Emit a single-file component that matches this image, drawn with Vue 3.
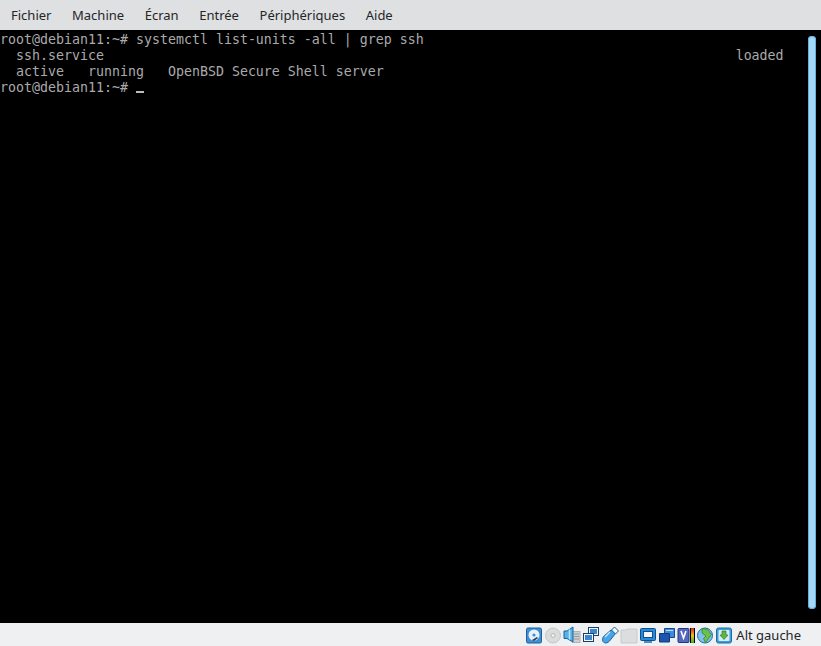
<script setup>
const menus = ['Fichier', 'Machine', 'Écran', 'Entrée', 'Périphériques', 'Aide']
const lines = [
  'root@debian11:~# systemctl list-units -all | grep ssh',
  '  ssh.service' + ' '.repeat(79) + 'loaded',
  '  active   running   OpenBSD Secure Shell server',
]
</script>

<template>
  <div class="window">
    <nav class="menubar">
      <span v-for="m in menus" :key="m" class="menu">{{ m }}</span>
    </nav>
    <main class="screen">
      <pre class="console"><template v-for="l in lines" :key="l">{{ l }}
</template>root@debian11:~# <span class="cursor"></span></pre>
      <div class="scroll"></div>
    </main>
    <footer class="status">
      <svg class="ic" width="18" height="18" viewBox="-1 0 18 18">
        <rect x="0.500" y="2" width="15" height="15" rx="1.500" fill="#3d8fd6" stroke="#1d5f9e"/>
        <circle cx="8" cy="9" r="5.500" fill="#e9f1f8"/>
        <circle cx="8" cy="9" r="1.600" fill="#3d8fd6"/>
        <path d="M6 14l5-3 1 1-4 3z" fill="#1c3d66"/>
      </svg>
      <svg class="ic" width="18" height="18" viewBox="0 0 18 18">
        <circle cx="9" cy="9.500" r="7.500" fill="#dadbdb" stroke="#c6c7c7"/>
        <circle cx="9" cy="9.500" r="2" fill="#eeeeee" stroke="#b8b8b8"/>
      </svg>
      <svg class="ic" width="18" height="18" viewBox="0 0 18 18">
        <rect x="9.500" y="5.500" width="7.500" height="11" fill="#cfd1d1" stroke="#b0b2b2"/>
        <path d="M11 8h5M11 10.500h5M11 13h5" stroke="#9a9c9c"/>
        <path d="M1 5h3l6-4v15l-6-3.500H1z" fill="#57b2ea" stroke="#14639e"/>
        <path d="M6.500 3.500v10" stroke="#bfe3f8" stroke-width="1.500"/>
      </svg>
      <svg class="ic" width="18" height="18" viewBox="0 0 18 18">
        <rect x="6.500" y="1.500" width="10" height="8" fill="#f3f7fa" stroke="#1c3d66"/>
        <rect x="8" y="3" width="7" height="5" fill="#3a86cf"/>
        <rect x="1.500" y="7.500" width="10" height="8" fill="#f3f7fa" stroke="#1c3d66"/>
        <rect x="3" y="9" width="7" height="5" fill="#3a86cf"/>
      </svg>
      <svg class="ic" width="18" height="18" viewBox="0 0 18 18">
        <path d="M10 4L2.500 10.500c-2 3-1 6 2 6.500 2 0 3-1 4-2l6-7.500z" fill="#45a5e8" stroke="#14639e"/>
        <path d="M10.500 4l3-3 4 4-3 3z" fill="#f4f6f8" stroke="#14639e"/>
        <path d="M4 11l5-5" stroke="#c6e6fb" stroke-width="1.500"/>
      </svg>
      <svg class="ic" width="18" height="18" viewBox="0 0 18 18">
        <path d="M1 4h5l1-1h10v14H1z" fill="#dcdddd" stroke="#c9caca"/>
      </svg>
      <svg class="ic" width="18" height="18" viewBox="0 0 18 18">
        <rect x="1.500" y="2.500" width="15" height="12" rx="1" fill="#2a8ada" stroke="#124f8a"/>
        <rect x="4.500" y="5.500" width="9" height="6" fill="#f4f8fb" stroke="#124f8a"/>
        <path d="M5 16h8" stroke="#1e6cb0" stroke-width="1.500"/>
      </svg>
      <svg class="ic" width="18" height="18" viewBox="0 0 18 18">
        <path d="M6.500 2.500h10v9h-10z" fill="#3e8bdc" stroke="#16478a"/>
        <path d="M1.500 7.500h10v8.500h-10z" fill="#1b55ad" stroke="#123b7a"/>
        <path d="M8 4.500h7" stroke="#bcdcf6"/>
      </svg>
      <span class="vbox">
        <svg width="13" height="18" viewBox="0 0 13 18">
          <rect x="1" y="2.500" width="11" height="14" rx="1" fill="#5468c0" stroke="#27347e"/>
          <path d="M4 5l2.500 7 2.500-7" fill="none" stroke="#fff" stroke-width="1.600"/>
        </svg>
        <i class="meter"></i>
      </span>
      <svg class="ic" width="18" height="18" viewBox="0 0 18 18">
        <circle cx="9" cy="9.500" r="7.500" fill="#7cc2ee" stroke="#1d6ca8"/>
        <path d="M6 2.500l5.500 1 4 5-6 8-2-4 2.500-2.500-4-3z" fill="#6cc04a" stroke="#2f7d25" stroke-width=".7"/>
      </svg>
      <svg class="ic" width="18" height="18" viewBox="-1 0 18 18">
        <rect x="0.500" y="2" width="15" height="15" rx="2" fill="#3f9ed8" stroke="#1d6ca8"/>
        <rect x="2.500" y="4" width="11" height="11" rx="1" fill="#d6ecf8"/>
        <path d="M6 5h4v4h2l-4 4.500L4 9h2z" fill="#62b83f" stroke="#2f7d25" stroke-width=".7"/>
      </svg>
      <span class="key">Alt gauche</span>
    </footer>
  </div>
</template>

<style>
html, body { margin: 0; background: #000; }
</style>

<style scoped>
.window {
  width: 821px;
  height: 646px;
  display: flex;
  flex-direction: column;
  overflow: hidden;
  font-family: "Noto Sans", sans-serif;
  font-size: 13px;
  color: #232629;
}
.menubar {
  height: 30px;
  flex: none;
  display: flex;
  align-items: center;
  gap: 20.6px;
  padding-left: 11px;
  background: #dfe0e1;
}
.screen {
  flex: 1;
  position: relative;
  background: #000;
}
.console {
  margin: 0;
  padding-top: 2px;
  font-family: "DejaVu Sans Mono", monospace;
  font-size: 13.29px;
  line-height: 16px;
  color: #aaa;
  white-space: pre;
}
.cursor {
  display: inline-block;
  width: 8px;
  height: 2px;
  background: #bbb;
  vertical-align: -1px;
}
.scroll {
  position: absolute;
  top: 6px;
  right: 5px;
  bottom: 14px;
  width: 8px;
  border-radius: 4px;
  background: #a6d8f3;
  box-shadow: inset 0 0 0 1px #5fb3e4;
}
.status {
  height: 23px;
  flex: none;
  display: flex;
  align-items: center;
  justify-content: flex-end;
  gap: 1px;
  padding-right: 20px;
  background: #eff0f1;
}
.ic, .vbox { flex: none; display: flex; align-items: center; }
.meter {
  box-sizing: border-box;
  width: 5px;
  height: 15px;
  margin-top: 1px;
  background: linear-gradient(#e02020, #e8c020 50%, #30b030);
  border: 0 solid #000;
  border-width: 0 1px;
}
.key { margin-left: 2px; }
</style>
